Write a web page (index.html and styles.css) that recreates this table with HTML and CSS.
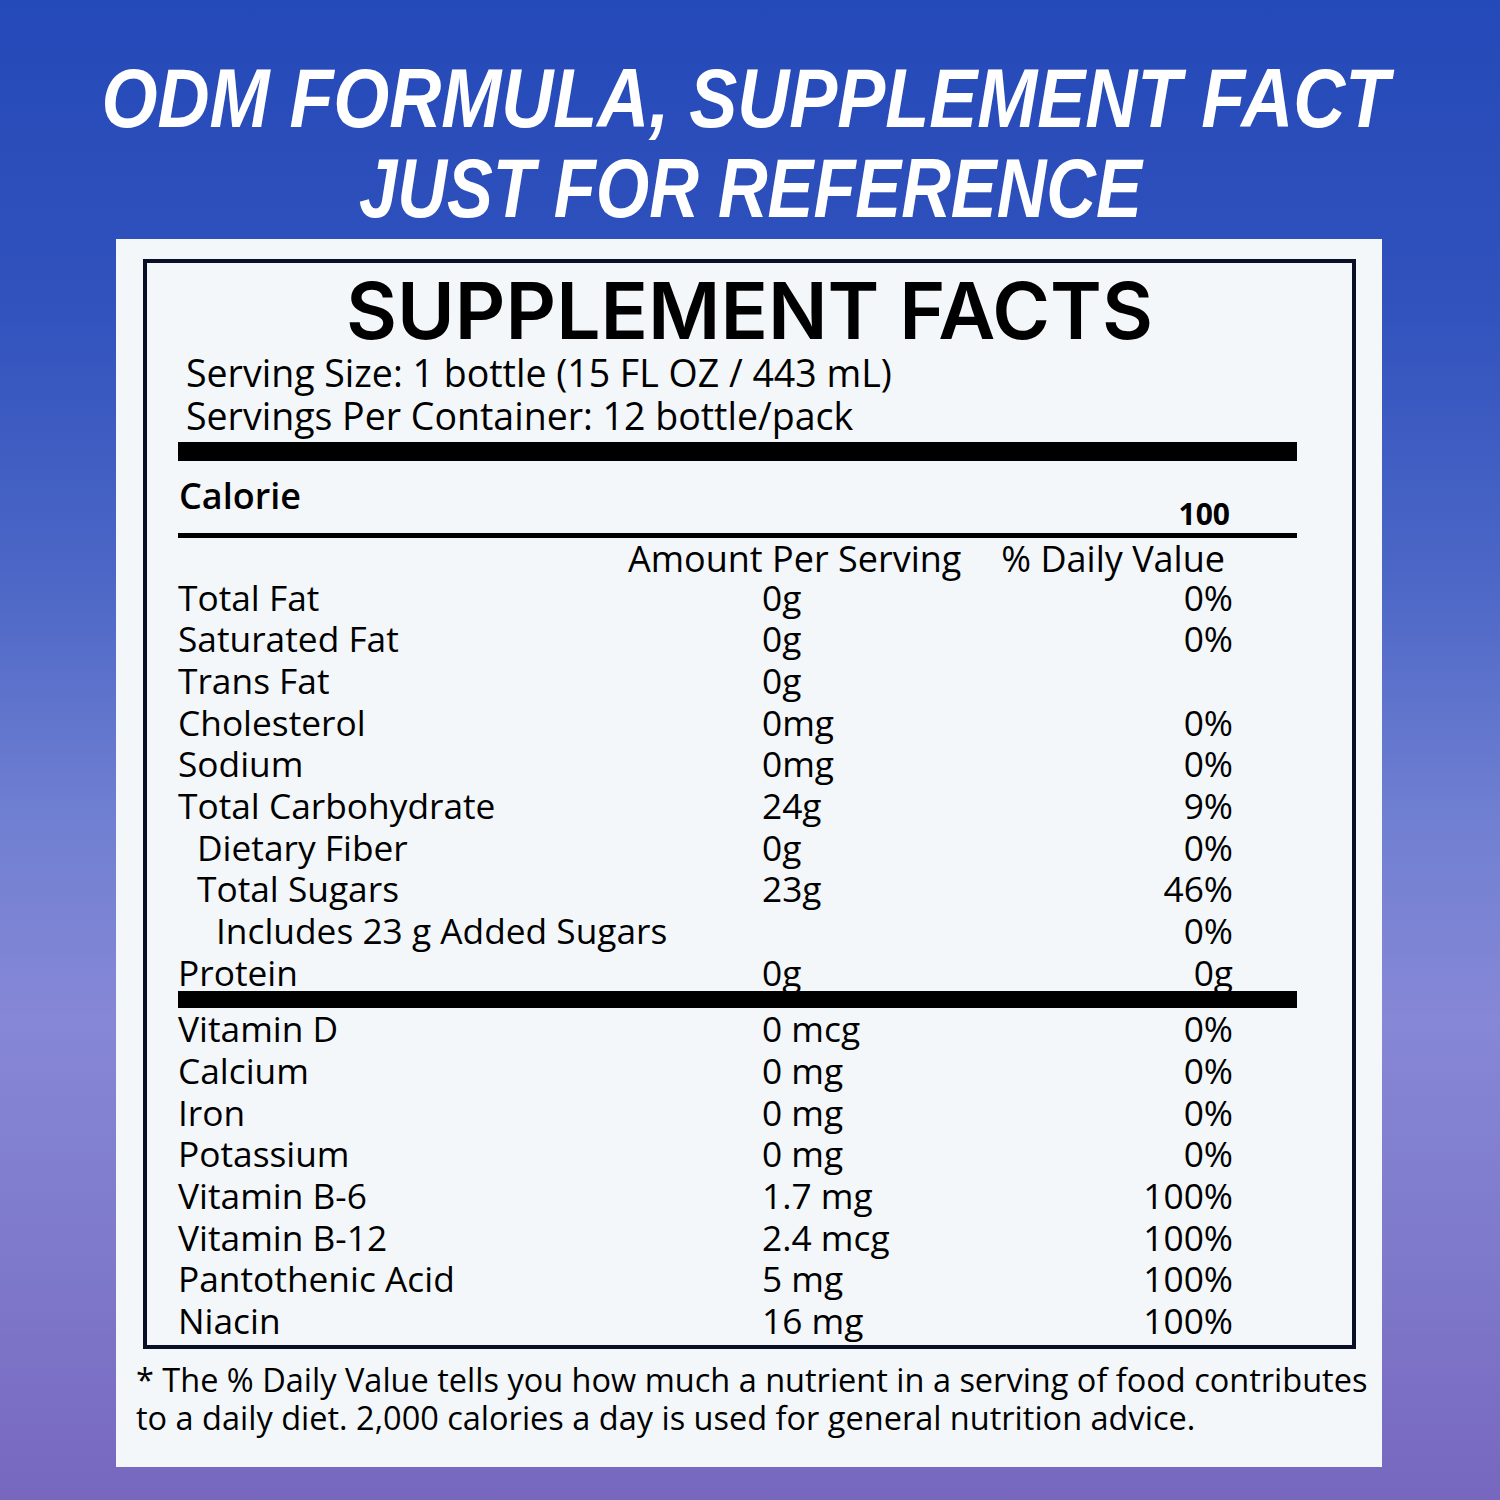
FILE: index.html
```html
<!DOCTYPE html>
<html>
<head>
<meta charset="utf-8">
<link rel="stylesheet" href="styles.css">
</head>
<body>
<div class="page">
  <h1 class="title"><span class="title-line first">ODM FORMULA, SUPPLEMENT FACT</span><span class="title-line second">JUST FOR REFERENCE</span></h1>
  <div class="panel">
    <div class="facts">
      <h2 class="facts-title">SUPPLEMENT FACTS</h2>
      <div class="serving">
        <div>Serving Size: 1 bottle (15 FL OZ / 443 mL)</div>
        <div>Servings Per Container: 12 bottle/pack</div>
      </div>
      <div class="bar thick"></div>
      <div class="calorie-row">
        <span class="cal-label">Calorie</span>
        <span class="cal-value">100</span>
      </div>
      <div class="bar thin"></div>
      <div class="col-head">
        <span>Amount Per Serving</span>
        <span>% Daily Value</span>
      </div>
      <div class="rows upper">
        <div class="row"><span class="name">Total Fat</span><span class="amt">0g</span><span class="dv">0%</span></div>
        <div class="row"><span class="name">Saturated Fat</span><span class="amt">0g</span><span class="dv">0%</span></div>
        <div class="row"><span class="name">Trans Fat</span><span class="amt">0g</span><span class="dv"></span></div>
        <div class="row"><span class="name">Cholesterol</span><span class="amt">0mg</span><span class="dv">0%</span></div>
        <div class="row"><span class="name">Sodium</span><span class="amt">0mg</span><span class="dv">0%</span></div>
        <div class="row"><span class="name">Total Carbohydrate</span><span class="amt">24g</span><span class="dv">9%</span></div>
        <div class="row"><span class="name indent1">Dietary Fiber</span><span class="amt">0g</span><span class="dv">0%</span></div>
        <div class="row"><span class="name indent1">Total Sugars</span><span class="amt">23g</span><span class="dv">46%</span></div>
        <div class="row"><span class="name indent2">Includes 23 g Added Sugars</span><span class="amt"></span><span class="dv">0%</span></div>
        <div class="row"><span class="name">Protein</span><span class="amt">0g</span><span class="dv">0g</span></div>
      </div>
      <div class="bar mid"></div>
      <div class="rows">
        <div class="row"><span class="name">Vitamin D</span><span class="amt">0 mcg</span><span class="dv">0%</span></div>
        <div class="row"><span class="name">Calcium</span><span class="amt">0 mg</span><span class="dv">0%</span></div>
        <div class="row"><span class="name">Iron</span><span class="amt">0 mg</span><span class="dv">0%</span></div>
        <div class="row"><span class="name">Potassium</span><span class="amt">0 mg</span><span class="dv">0%</span></div>
        <div class="row"><span class="name">Vitamin B-6</span><span class="amt">1.7 mg</span><span class="dv">100%</span></div>
        <div class="row"><span class="name">Vitamin B-12</span><span class="amt">2.4 mcg</span><span class="dv">100%</span></div>
        <div class="row"><span class="name">Pantothenic Acid</span><span class="amt">5 mg</span><span class="dv">100%</span></div>
        <div class="row"><span class="name">Niacin</span><span class="amt">16 mg</span><span class="dv">100%</span></div>
      </div>
    </div>
    <p class="footnote">* The % Daily Value tells you how much a nutrient in a serving of food contributes<br>to a daily diet. 2,000 calories a day is used for general nutrition advice.</p>
  </div>
</div>
</body>
</html>
```

FILE: styles.css
```css
html, body {
  margin: 0;
  padding: 0;
}
body {
  width: 1500px;
  height: 1500px;
  background: linear-gradient(180deg, #2449b8 0%, #3152bd 20%, #4b66c6 38%, #7180d2 55%, #8687d6 68%, #7e78ca 85%, #7767bf 100%);
  font-family: "Open Sans", "Noto Sans", sans-serif;
  color: #000;
  overflow: hidden;
}
.page {
  display: flex;
  flex-direction: column;
  align-items: center;
}
.title {
  margin: 53px 0 6px;
  font-family: "Liberation Sans", Arial, sans-serif;
  font-style: italic;
  font-weight: 700;
  font-size: 84px;
  line-height: 90px;
  color: #fff;
  text-align: center;
  display: flex;
  flex-direction: column;
  align-items: center;
  width: 1500px;
}
.title-line {
  display: block;
  white-space: nowrap;
  transform-origin: center;
}
.title-line.first {
  transform: translateX(-5px) scaleX(0.857);
}
.title-line.second {
  transform: scaleX(0.818);
}
.panel {
  width: 1266px;
  box-sizing: border-box;
  background: #f3f7fa;
  padding: 20px 26px 30px 27px;
  align-self: flex-start;
  margin-left: 116px;
}
.facts {
  border: 4px solid #0a0f28;
  padding: 0 0 3px;
}
.facts-title {
  margin: 8px 0 0;
  font-family: Inter, "Open Sans", sans-serif;
  font-weight: 600;
  font-size: 78.5px;
  line-height: 80px;
  text-align: center;
}
.serving {
  margin: 0 55px 0 39px;
  font-size: 37.5px;
  line-height: 43px;
}
.bar {
  background: #000;
  margin: 0 55px 0 31px;
}
.bar.thick {
  height: 19px;
  margin-top: 5px;
}
.bar.thin {
  height: 5px;
}
.bar.mid {
  height: 17px;
  margin-top: -2px;
  position: relative;
}
.calorie-row {
  height: 72px;
  margin: 0 55px 0 31px;
  display: flex;
  justify-content: space-between;
}
.cal-label {
  font-size: 36px;
  font-weight: 600;
  line-height: 43px;
  margin-top: 13px;
  margin-left: 1px;
}
.cal-value {
  align-self: flex-end;
  font-size: 30px;
  font-weight: 700;
  line-height: 36px;
  margin-right: 67px;
  margin-bottom: 1px;
}
.col-head {
  margin: 0 127px 0 31px;
  display: flex;
  justify-content: flex-end;
  gap: 40px;
  font-size: 36px;
  font-weight: 500;
  line-height: 41.67px;
}
.rows {
  margin: 0 119px 0 31px;
}
.rows.upper {
  margin-top: -3px;
}
.row {
  display: grid;
  grid-template-columns: 584px 1fr auto;
  font-size: 35.3px;
  line-height: 41.67px;
}
.dv {
  text-align: right;
}
.indent1 {
  padding-left: 19px;
}
.indent2 {
  padding-left: 38px;
}
.footnote {
  margin: 12px 0 0 -7px;
  font-size: 32.5px;
  line-height: 38px;
  white-space: nowrap;
}
```
